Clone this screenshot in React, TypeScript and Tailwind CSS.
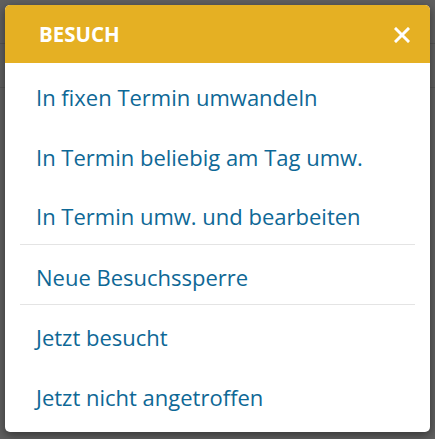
import React from "react";

const items: { label: string; dividerBefore?: boolean }[] = [
  { label: "In fixen Termin umwandeln" },
  { label: "In Termin beliebig am Tag umw." },
  { label: "In Termin umw. und bearbeiten" },
  { label: "Neue Besuchssperre", dividerBefore: true },
  { label: "Jetzt besucht", dividerBefore: true },
  { label: "Jetzt nicht angetroffen" },
];

const App = () => {
  return (
    <div
      className="relative h-[439px] w-[435px] overflow-hidden bg-[#5f5f5f]"
      style={{ fontFamily: '"Open Sans", sans-serif' }}
    >
      {/* dimmed page behind the overlay */}
      <div className="absolute left-0 top-[43px] h-px w-full bg-[#545454]" />
      <div className="absolute left-0 top-[87px] h-px w-full bg-[#555555]" />

      <div className="relative px-[5px] pt-[5px]">
        <div className="overflow-hidden rounded-[5px] bg-white shadow-[0_3px_10px_rgba(0,0,0,0.45)]">
          <div className="flex h-[58px] items-center justify-between bg-[#e5b023] pl-[34px] pr-[20px]">
            <span className="text-[20.5px] font-bold text-white">BESUCH</span>
            <svg width="16" height="16" viewBox="0 0 16 16" className="mt-px">
              <path
                d="M2 2 L14 14 M14 2 L2 14"
                stroke="white"
                strokeWidth="3"
                strokeLinecap="square"
              />
            </svg>
          </div>
          <div className="px-[15px] pb-[8px] pt-[2px]">
            {items.map((item) => (
              <div key={item.label}>
                {item.dividerBefore && <div className="h-px bg-[#e4e4e4]" />}
                <div className="px-[16px] pb-[12.5px] pt-[17px] text-[22px] leading-[30px] text-[#0e6896]">
                  {item.label}
                </div>
              </div>
            ))}
          </div>
        </div>
      </div>
    </div>
  );
};

export default App;
